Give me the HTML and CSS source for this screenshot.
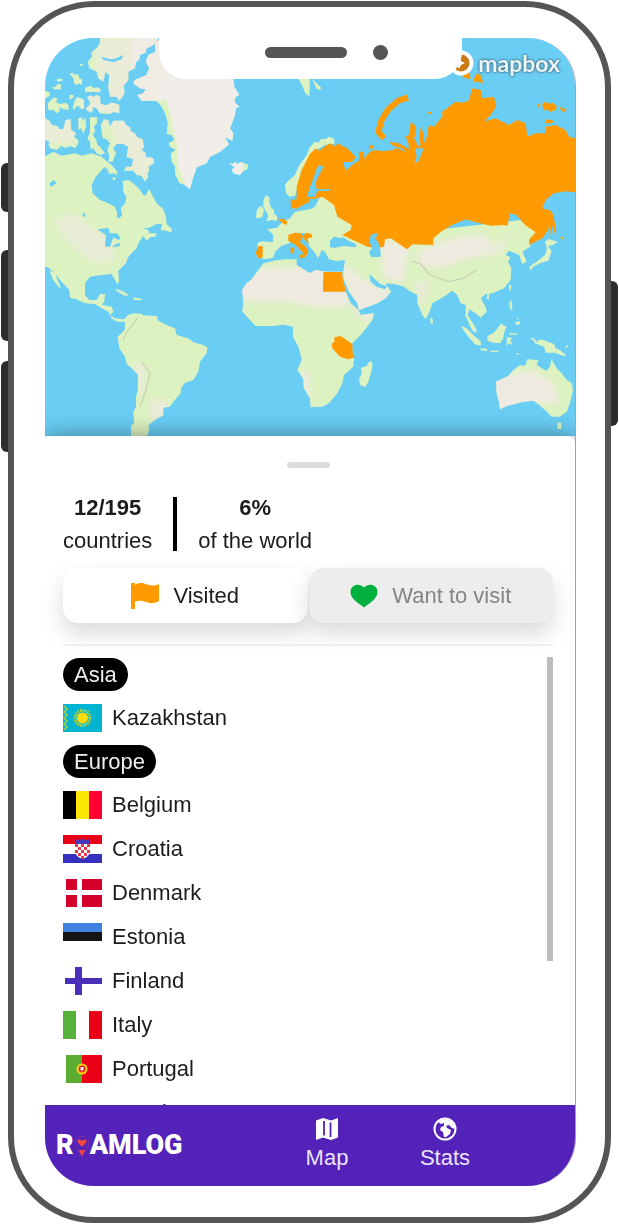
FILE: index.html
```html
<!DOCTYPE html>
<html lang="en">
<head>
<meta charset="utf-8">
<meta name="viewport" content="width=device-width, initial-scale=1">
<title>Roamlog</title>
<link rel="stylesheet" href="styles.css">
</head>
<body>
<div class="phone">
  <span class="key key-mute"></span>
  <span class="key key-up"></span>
  <span class="key key-down"></span>
  <span class="key key-power"></span>
  <div class="screen">
    <div class="notch"><span class="speaker"></span><span class="camera"></span></div>

    <div class="map">
      <svg class="world" viewBox="135 114 1590 1194" preserveAspectRatio="xMidYMid slice" role="img" aria-label="World map">
        <defs>
          <filter id="soft" x="-30%" y="-30%" width="160%" height="160%"><feGaussianBlur stdDeviation="10"/></filter>
          <path id="land" d="M130 472L160 455 185 467 225 460 245 467 275 460 305 470 322 485 335 495 352 515 348 522 325 510 315 500 300 515 285 535 275 555 278 580 300 600 325 610 345 620 352 640 350 652 357 655 367 645 362 625 375 610 379 590 370 575 368 543 385 540 400 550 420 570 432 587 438 585 447 567 462 595 470 610 490 628 498 650 500 672 516 688 514 697 498 692 482 690 486 672 470 672 446 684 428 685 445 690 447 700 470 700 466 710 450 712 440 722 430 708 415 730 410 745 385 770 378 790 355 812 357 845 352 853 345 840 335 822 305 825 270 830 255 850 255 885 268 900 290 900 300 882 315 882 313 905 305 914 335 920 340 935 330 945 345 955 365 958 372 958 385 945 400 940 425 941 428 946 470 948 475 962 500 975 525 985 530 1005 565 1015 580 1027 610 1035 622 1042 620 1060 600 1085 595 1115 580 1140 555 1148 543 1165 542 1180 520 1205 510 1220 490 1223 490 1245 465 1260 445 1275 448 1290 440 1310 393 1310 393 1278 402 1270 400 1235 408 1220 408 1190 414 1170 414 1125 395 1105 380 1092 375 1070 358 1045 353 1010 374 990 375 965 350 965 335 955 325 935 300 922 285 912 255 910 230 898 210 893 208 870 185 845 160 815 146 803 130 798Z
            M148 810L165 820 183 865 175 860 158 838ZM345 866L365 872 387 885 375 888 350 873ZM400 892L425 896 424 901 400 899Z
            M300 114L475 114 468 128 455 138 440 145 436 158 420 165 418 178 408 186 404 205 385 215 385 240 370 258 374 275 368 290 357 302 350 290 330 290 325 262 328 225 316 215 310 245 295 235 290 215 268 205 263 185 275 170 275 155 290 145 300 130Z
            M209 222L216 218 225 224 234 222 238 234 247 240 245 255 235 250 230 256 222 248 220 234ZM157 262L168 260 172 252 182 252 183 268 160 268ZM170 237L187 236 187 242 172 245ZM135 272L148 276 150 288 140 292 135 298ZM143 312L152 300 162 292 172 296 168 306 180 312 198 308 206 316 206 330 190 328 180 322 178 334 170 340 160 330 145 330ZM218 322L222 308 230 292 242 294 252 300 252 325 244 328 236 318 228 320 222 330ZM262 290L275 286 280 292 290 284 300 290 302 312 320 316 332 308 345 310 358 315 358 340 340 336 330 342 300 340 290 325 280 320 275 338 262 332 258 325 272 312ZM255 262L265 262 268 256 283 265 290 262 303 268 300 277 255 275ZM240 192L248 192 248 197 240 197ZM208 285L220 285 220 292 208 300Z
            M135 355L148 362 155 375 172 378 178 388 190 388 197 360 212 358 213 390 222 394 228 400 222 412 235 420 235 430 225 445 212 438 195 444 185 438 170 450 150 445 145 432 150 425 135 420ZM235 355L245 352 248 362 256 352 258 380 250 402 244 385 235 390ZM270 352L292 352 290 372 282 378 285 395 278 404 288 418 292 434 300 440 315 460 302 465 290 460 280 445 272 448 270 425 262 415 270 398ZM302 375L312 358 325 360 330 380 340 362 372 362 378 375 390 382 392 394 405 400 410 410 428 418 432 440 425 450 436 458 438 474 450 470 462 478 462 490 445 500 448 512 442 522 445 530 435 545 425 528 410 525 400 512 372 512 378 500 395 500 400 478 380 470 385 440 370 432 350 432 340 445 348 460 338 485 325 485 328 468 322 450 330 430 320 418 308 415Z
            M320 488L335 494 350 516 353 526 340 520 328 522 322 508ZM338 532L346 532 346 540 338 540Z
            M478 120L465 128 467 155 445 165 438 185 448 205 440 225 405 240 400 250 420 265 438 267 430 280 413 285 425 303 470 303 485 320 497 345 503 370 500 402 515 405 523 420 505 430 510 440 527 450 512 460 515 485 525 500 525 522 538 550 555 555 570 568 577 540 590 502 620 490 630 470 660 455 687 433 675 412 697 422 700 400 690 385 705 345 708 325 718 320 703 305 707 290 718 285 703 260 700 236 700 114Z
            M687 488L700 492 704 486 712 492 722 487 734 490 745 495 742 508 730 512 720 525 700 520 695 508 705 503ZM895 236L928 236 930 255 928 290 915 278 906 255ZM936 236L962 262 962 270 950 266 942 250Z
            M930 440L945 425 955 428 962 418 980 416 985 410 1003 416 1003 432 975 435 940 455 920 485 905 510 890 570 885 588 868 590 858 578 855 555 862 545 885 525 895 500 920 465Z
            M790 602L797 585 808 592 808 605 812 620 822 630 822 640 832 650 830 662 812 660 798 664 805 648 800 638 790 620ZM770 632L776 622 783 618 792 628 787 652 768 655Z
            M773 728L785 724 818 727 820 705 802 688 832 683 845 668 870 655 885 635 930 628 945 620 960 590 1000 585 1100 650 1300 690 1560 660 1610 690 1590 740 1567 755 1580 785 1567 792 1557 765 1527 752 1517 765 1532 772 1524 785 1534 805 1532 840 1512 865 1477 880 1457 882 1442 895 1457 922 1460 935 1442 953 1427 940 1407 928 1402 950 1417 970 1430 995 1420 993 1407 965 1397 950 1397 915 1382 910 1372 885 1357 872 1332 890 1297 910 1289 935 1277 958 1267 945 1252 910 1252 885 1227 872 1212 860 1187 853 1157 850 1173 875 1157 895 1132 910 1077 930 1072 910 1047 875 1032 840 1030 815 1035 780 1010 783 987 778 975 755 965 750 960 762 955 775 942 755 927 738 920 700 900 700 867 730 845 737 825 755 820 773 795 778 770 770Z
            M790 790L820 782 850 778 890 778 890 795 930 820 947 810 977 815 1027 815 1028 840 1037 875 1052 910 1075 930 1082 945 1122 940 1117 960 1087 1000 1057 1030 1055 1055 1062 1075 1060 1100 1032 1125 1027 1150 1012 1180 987 1210 967 1220 932 1222 930 1195 912 1165 909 1135 892 1110 905 1080 897 1045 879 1010 879 980 850 974 822 978 767 978 745 955 727 935 730 905 727 870 740 850 755 838 768 820Z
            M1108 1085L1117 1085 1117 1105 1105 1145 1095 1162 1080 1155 1077 1138 1085 1120 1083 1103 1100 1098ZM1292 950L1299 960 1298 972 1291 970Z
            M1384 977L1400 985 1420 1005 1443 1025 1442 1037 1425 1033 1405 1010 1390 990ZM1398 945L1406 950 1428 985 1430 998 1420 995 1408 975ZM1462 1008L1480 1000 1505 970 1512 978 1520 978 1512 1000 1510 1015 1500 1030 1480 1028 1463 1022ZM1442 1045L1460 1046 1463 1053 1442 1051ZM1470 1052H1495V1056H1470ZM1520 1012L1540 1014 1530 1020 1538 1035 1527 1030 1520 1038ZM1528 1000H1552V1004H1528ZM1548 1060H1558V1063H1548ZM1587 1013L1602 1015 1610 1025 1620 1018 1640 1024 1662 1032 1667 1045 1680 1050 1700 1067 1688 1067 1665 1058 1637 1058 1632 1040 1605 1030 1600 1020ZM1695 1040L1706 1034 1700 1044ZM1529 902L1535 902 1535 925 1529 928ZM1530 900L1537 918 1532 932 1538 930ZM1545 968L1558 962 1560 972 1550 975ZM1550 955L1556 952 1555 960ZM1462 880L1468 880 1466 900 1460 895ZM1527 855L1534 855 1532 873 1528 873Z
            M1635 725L1645 717 1673 725 1660 735 1645 737 1655 755 1645 782 1620 790 1600 800 1590 812 1588 800 1610 785 1635 765 1641 745Z
            M1488 1145L1520 1130 1525 1128 1540 1110 1560 1095 1575 1098 1582 1078 1615 1080 1610 1095 1638 1112 1650 1100 1654 1077 1665 1095 1670 1105 1685 1120 1700 1140 1715 1148 1719 1170 1710 1210 1700 1235 1680 1250 1655 1250 1635 1230 1618 1215 1600 1202 1570 1205 1520 1218 1500 1228 1497 1205 1490 1180ZM1672 1268L1684 1268 1684 1287 1672 1287Z"/>
          <clipPath id="coast"><use href="#land"/></clipPath>
        </defs>
        <rect class="sea" x="135" y="114" width="1590" height="1194"/>
        <use href="#land" class="land"/>
        <g clip-path="url(#coast)">
          <g class="ice">
            <path d="M395 114H730V570H560L535 500 530 430 500 300H395Z"/>
          </g>
          <g class="dry" filter="url(#soft)">
            <path d="M280 114H480V310H350L290 230ZM240 275H360V345H240ZM130 350H230V430H130ZM300 350H390L470 480 440 540 370 500 340 400ZM160 660L220 640 330 720 350 780 280 790 200 720Z" opacity=".7"/>
            <path d="M700 860L780 805 900 800 1030 800 1050 920 940 920 860 905 700 905ZM1030 790L1110 850 1190 880 1070 950ZM1140 720L1230 730 1210 850 1150 830ZM1250 760L1320 725 1450 700 1480 740 1340 800 1260 800ZM1470 1130L1600 1110 1660 1150 1680 1210 1600 1210 1490 1240ZM1070 925L1135 925 1100 970Z"/>
            <path d="M405 1090H432V1190H410ZM450 1200H500V1260H450ZM900 1110H930V1220H900ZM1540 700L1500 760 1400 780ZM1240 850L1290 840 1270 920Z" opacity=".8"/>
          </g>
          <path class="ridge" d="M1237 785L1260 790 1290 825 1345 845 1390 835 1430 810M412 955L385 990 368 1020M425 1085L450 1120 435 1180 420 1220"/>
        </g>
        <g class="visited">
          <path d="M905 510L930 462 947 445 957 452 977 438 990 430 1007 440 1012 430 1042 445 1067 470 1057 485 1035 490 1037 512 1060 492 1077 482 1077 455 1090 455 1092 475 1110 455 1127 450 1150 454 1177 450 1192 443 1217 457 1207 445 1180 438 1167 425 1197 430 1227 447 1225 430 1217 410 1228 404 1232 365 1247 378 1247 405 1242 415 1250 430 1252 440 1262 436 1258 415 1262 380 1270 400 1272 430 1280 412 1282 400 1287 375 1302 380 1327 350 1327 335 1367 305 1390 308 1407 300 1417 265 1442 270 1447 295 1482 290 1488 320 1472 345 1452 365 1487 355 1527 375 1552 360 1577 370 1582 410 1607 400 1637 400 1637 380 1667 375 1697 390 1707 410 1725 415V577L1697 574 1662 580 1637 600 1627 625 1647 630 1650 650 1645 690 1627 715 1587 735 1587 720 1607 697 1575 675 1550 645 1530 640 1522 678 1512 675 1472 677 1427 667 1397 658 1357 675 1327 692 1300 715 1300 735 1237 733 1222 748 1202 735 1172 715 1155 718 1152 740 1130 745 1102 740 1027 705 1052 690 1055 675 1012 650 1002 615 967 590 940 598 930 595 930 605 905 617 890 626 873 624 872 600 890 598 890 560Z"/>
          <path d="M1386 230L1405 215 1412 233 1408 238ZM1420 246L1424 230 1432 220 1442 226 1446 238 1450 250 1436 246ZM1627 312L1635 305 1650 312 1655 306 1670 318 1668 330 1650 335 1640 328 1630 333ZM1612 310L1620 315 1618 322 1612 320ZM1680 320L1700 330 1695 336 1682 330ZM1640 358L1662 362 1655 370 1635 370ZM1108 436L1118 436 1120 446 1108 446ZM1285 336H1293V342H1285ZM1651 630L1660 645 1668 690 1665 705 1658 675 1652 710 1652 700 1647 660ZM1680 712L1692 710 1688 718Z"/>
          <path class="isle" d="M1224 292L1195 302 1165 328 1145 360 1135 395 1152 415"/>
          <path d="M834 658L850 656 862 665 860 675 848 670ZM775 738L788 738 788 773 775 775 767 760ZM865 705L885 698 905 700 905 715 900 725 922 745 925 758 915 772 898 775 900 765 912 762 888 735 865 722ZM872 742L883 745 882 760 872 760ZM905 710L920 698 935 703 937 712 920 716 930 732 915 720ZM970 816H1027V832L1038 875H969ZM1003 1012L1022 1008 1057 1032 1058 1060 1064 1072 1045 1078 1020 1070 997 1045 995 1032 1003 1025Z"/>
        </g>
        <g class="sea">
          <path d="M938 494L951 500 940 520 926 550 932 572 926 590 908 590 900 592 910 560 922 530 928 510Z" transform="translate(20)"/>
          <path d="M950 568H990V573H950ZM1112 705L1132 698 1128 718 1140 735 1142 770 1115 772 1107 758 1116 745 1108 725ZM990 722L1002 710 1018 714 1030 712 1045 722 1068 732 1068 742 1030 738 1005 743 990 742ZM1030 486H1054L1058 492 1045 505 1030 500ZM1245 445L1271 445 1265 460 1255 485 1243 488 1250 470Z"/>
          <path d="M292 688L325 684 330 700 350 700 362 714 355 720 340 712 330 740 315 740 318 705ZM337 738L358 728 360 738 340 742ZM148 550L162 540 170 550 152 560ZM248 637L257 645 255 652 248 648ZM305 170L330 178 345 176 370 165 365 178 340 186 310 180ZM1108 822L1127 840 1142 853 1162 858 1155 868 1130 860 1112 845Z"/>
        </g>
      </svg>
      <a class="mapbox" href="#mapbox">
        <svg class="mapbox-mark" viewBox="0 0 26 26" aria-hidden="true"><circle cx="13" cy="13" r="10.500" fill="#c97a12" stroke="#fff" stroke-width="4"/><path d="M11 7l2 4 4 2-4 2-2 4-2-4-4-2 4-2z" fill="#fff"/></svg>
        <span>mapbox</span>
      </a>
    </div>

    <main class="sheet">
      <div class="handle"></div>
      <div class="stats">
        <p class="stat"><strong>12/195</strong><span>countries</span></p>
        <span class="divider"></span>
        <p class="stat"><strong>6%</strong><span>of the world</span></p>
      </div>
      <div class="tabs">
        <button class="tab tab-active" type="button">
          <svg class="tab-icon" viewBox="0 0 28 28" aria-hidden="true"><path d="M0 1H4V3C9 0 12 1 16 2.500 20 4 24 4 28 2V19C23 22 19 21.500 15 20 11 18.500 8 18.500 4 19.500V27H0Z" fill="#ff9b00"/></svg>
          <span>Visited</span>
        </button>
        <button class="tab" type="button">
          <svg class="tab-icon" viewBox="0 0 28 28" aria-hidden="true"><path d="M14 25.500C10 22 0 17 .5 9.500 1 3 9 .5 14 5.500 19 .5 27 3 27.500 9.500 28 17 18 22 14 25.500Z" fill="#00b140"/></svg>
          <span>Want to visit</span>
        </button>
      </div>
      <hr class="rule">
      <div class="scroller">
        <div class="list">
          <h2 class="region">Asia</h2>
          <ul class="countries">
            <li class="country"><svg class="flag" viewBox="0 0 39 28" aria-hidden="true"><path d="M0 0H39V28H0Z" fill="#00b5d1"/><circle cx="19.500" cy="14" r="7.500" fill="none" stroke="#b5d334" stroke-width="3" stroke-dasharray="1.500 1"/><circle cx="19.500" cy="14" r="5.500" fill="#fddc0b"/><path d="M1 2L4 5 1 8 4 11 1 14 4 17 1 20 4 23 1 26" fill="none" stroke="#a8cf3c" stroke-width="1.500"/></svg>Kazakhstan</li>
          </ul>
          <h2 class="region">Europe</h2>
          <ul class="countries">
            <li class="country"><svg class="flag" viewBox="0 0 39 28" aria-hidden="true"><path d="M0 0H13V28H0Z"/><path d="M13 0H26V28H13Z" fill="#fbe700"/><path d="M26 0H39V28H26Z" fill="#ff0036"/></svg>Belgium</li>
            <li class="country"><svg class="flag" viewBox="0 0 39 28" aria-hidden="true"><path d="M0 0H39V9H0Z" fill="#ea0016"/><path d="M0 19H39V28H0Z" fill="#3530bd"/><path d="M12 9H27V17Q26 22 19.500 24 13 22 12 17Z" fill="#fff"/><path d="M12 4L16 5 19.500 4 23 5 27 4V9H12Z" fill="#4638b8"/><path d="M12 9h3v3h-3zM18 9h3v3h-3zM24 9h3v3h-3zM15 12h3v3h-3zM21 12h3v3h-3zM12 15h3v3h-3zM18 15h3v3h-3zM24 15h3v3h-3zM15 18h3v3h-3zM21 18h3v3h-3zM18 21h3v3h-3z" fill="#ea3b4b"/></svg>Croatia</li>
            <li class="country"><svg class="flag" viewBox="0 0 39 28" aria-hidden="true"><path d="M3 0H14V11H3ZM19 0H39V11H19ZM3 16H14V28H3ZM19 16H39V28H19Z" fill="#d2002b"/></svg>Denmark</li>
            <li class="country"><svg class="flag" viewBox="0 0 39 28" aria-hidden="true"><path d="M0 0H39V9H0Z" fill="#4182e0"/><path d="M0 9H39V18H0Z" fill="#141414"/></svg>Estonia</li>
            <li class="country"><svg class="flag" viewBox="0 0 39 28" aria-hidden="true"><path d="M2 11H12V0H19V11H39V17H19V28H12V17H2Z" fill="#4a2fb8"/></svg>Finland</li>
            <li class="country"><svg class="flag" viewBox="0 0 39 28" aria-hidden="true"><path d="M0 0H13V28H0Z" fill="#56b23a"/><path d="M26 0H39V28H26Z" fill="#ea0016"/></svg>Italy</li>
            <li class="country"><svg class="flag" viewBox="0 0 39 28" aria-hidden="true"><path d="M3 0H19V28H3Z" fill="#5cab32"/><path d="M19 0H39V28H19Z" fill="#ea0016"/><circle cx="19" cy="14" r="4.500" fill="#ea3a20" stroke="#f5d50c" stroke-width="2"/><path d="M17 11.500H21V15Q19 18 17 15Z" fill="#fff" stroke="#ea0016"/></svg>Portugal</li>
            <li class="country"><svg class="flag" viewBox="0 0 39 28" aria-hidden="true"><path d="M0 9H39V19H0Z" fill="#2a4fc0"/><path d="M0 19H39V28H0Z" fill="#d2002b"/></svg>Russia</li>
          </ul>
        </div>
        <span class="thumb"></span>
      </div>
    </main>

    <nav class="nav">
      <a class="logo" href="#home" aria-label="Roamlog"><span>R</span><svg class="pin" viewBox="0 0 16 24" aria-hidden="true"><path d="M8 23L2 13A7 7 0 1 1 14 13Z" fill="none" stroke="#7d2c9c" stroke-width="1"/><path d="M8 13L3.500 8Q3 5 6 5.500L8 7 10 5.500Q13 5 12.500 8Z" fill="#f4483f"/><path d="M4.500 15.500Q8 17 11.500 15.500L8 22Z" fill="#f4483f"/></svg><span>AMLOG</span></a>
      <a class="nav-link" href="#map">
        <svg class="nav-icon" viewBox="0 0 24 24" aria-hidden="true"><path d="M1 3.500L8 1 16 3.500 23 1V20.500L16 23 8 20.500 1 23Z" fill="#fff"/><path d="M9 4V18.500M15.500 5.500V20" fill="none" stroke="#5322b8" stroke-width="1.800"/></svg>
        <span>Map</span>
      </a>
      <a class="nav-link" href="#stats">
        <svg class="nav-icon" viewBox="0 0 24 24" aria-hidden="true"><circle cx="12" cy="12" r="10.500" fill="#5322b8" stroke="#fff" stroke-width="2"/><path d="M5 5Q12-1 20 6L22 12 19 11 16 8 13 9 14 11 18 13 17 17 13 20 11 20 10 15 7 13 8 10 11 9 11 6 8 7Z" fill="#fff"/></svg>
        <span>Stats</span>
      </a>
    </nav>
  </div>
</div>
</body>
</html>
```
FILE: styles.css
```css
* { box-sizing: border-box; }

body {
  margin: 0;
  padding: 1px 8px;
  background: #fff;
  color: #1c1c1c;
  font: 22px/33px "Liberation Sans", Arial, sans-serif;
}

h2, p, ul { margin: 0; padding: 0; }
ul { list-style: none; }
a { color: inherit; text-decoration: none; }

/* Device */
.phone {
  position: relative;
  height: calc(100vh - 2px);
  padding: 31px 29px 31px 31px;
  border: 6px solid #555;
  border-radius: 86px;
}

.key {
  position: absolute;
  left: -13px;
  width: 7px;
  border-radius: 6px 0 0 6px;
  background: #2d2d2d;
}
.key-mute { top: 156px; height: 49px; }
.key-up { top: 243px; height: 91px; }
.key-down { top: 354px; height: 91px; }
.key-power {
  top: 274px;
  right: -13px;
  left: auto;
  height: 145px;
  border-radius: 0 6px 6px 0;
}

.screen {
  position: relative;
  display: flex;
  flex-direction: column;
  height: 100%;
  overflow: hidden;
  border-right: 1px solid #aba0a0;
  border-radius: 48px;
}

.notch {
  position: absolute;
  z-index: 3;
  top: 0;
  left: 50%;
  width: 303px;
  height: 41px;
  margin-left: -151px;
  border-radius: 0 0 27px 27px;
  background: #fff;
}
.speaker, .camera { position: absolute; background: #555; }
.speaker { top: 9px; left: 106px; width: 82px; height: 11px; border-radius: 6px; }
.camera { top: 7px; left: 214px; width: 15px; height: 15px; border-radius: 50%; }

/* Map */
.map { position: relative; flex: none; height: 398px; }
.world { display: block; width: 100%; height: 100%; }
.sea { fill: #69cdf4; }
.land { fill: #dcf2c0; }
.ice { fill: #f1ede8; }
.dry { fill: #efeae1; }
.ridge { fill: none; stroke: #c9d4b0; stroke-width: 4; }
.visited { fill: #ff9b00; }
.isle { fill: none; stroke: #ff9b00; stroke-width: 18; }

.mapbox {
  position: absolute;
  top: 10px;
  right: 15px;
  display: flex;
  align-items: center;
  gap: 4px;
  color: #e9f6fc;
  font: 700 23px/30px Lato, sans-serif;
  text-shadow: 0 0 3px #45636f, 0 0 2px #45636f;
}
.mapbox-mark { width: 26px; height: 26px; }

/* Bottom sheet */
.sheet {
  position: relative;
  display: flex;
  flex: 1;
  flex-direction: column;
  min-height: 0;
  padding: 26px 22px 0 18px;
  border-radius: 4px 8px 0 0;
  background: #fff;
  box-shadow: 0 0 22px rgba(0, 0, 0, .4);
}

.handle {
  flex: none;
  align-self: center;
  width: 43px;
  height: 6px;
  margin-bottom: 23px;
  border-radius: 3px;
  background: #ddd;
}

.stats { display: flex; align-items: center; gap: 21px; margin-bottom: 11px; }
.stat { display: flex; flex-direction: column; align-items: center; }
.divider { width: 4px; height: 54px; background: #000; }

.tabs { display: flex; gap: 1px; }
.tab {
  display: flex;
  flex: 1;
  align-items: center;
  justify-content: center;
  gap: 14px;
  height: 55px;
  padding: 0;
  border: 0;
  border-radius: 15px;
  background: #ededed;
  color: #858585;
  font: inherit;
  box-shadow: 0 11px 22px rgba(0, 0, 0, .15);
}
.tab-active { background: #fff; color: #1c1c1c; }
.tab-icon { width: 28px; height: 28px; }

.rule {
  flex: none;
  width: 100%;
  height: 2px;
  margin: 21px 0 11px;
  border: 0;
  background: #eee;
}

.scroller { display: flex; flex: 1; min-height: 0; }
.list { flex: 1; padding-top: 1px; overflow-y: auto; scrollbar-width: none; }
.thumb { width: 6px; height: 304px; background: #bdbdbd; }

.region {
  width: fit-content;
  margin-bottom: 10px;
  padding: 0 11px;
  border-radius: 17px;
  background: #000;
  color: #eee;
  font-size: 22px;
  font-weight: 400;
}
.country {
  display: flex;
  align-items: center;
  gap: 10px;
  margin-bottom: 11px;
}
.flag { width: 39px; height: 28px; }

/* Navigation */
.nav {
  z-index: 1;
  display: grid;
  flex: none;
  grid-template-columns: 223fr 118fr 118fr 71fr;
  align-items: center;
  height: 81px;
  background: #5322b8;
  color: #ebe3fa;
}
.logo {
  display: flex;
  align-items: center;
  padding-left: 11px;
  color: #fff;
  font: 900 27px/33px Roboto, sans-serif;
}
.pin { width: 16px; height: 24px; }
.nav-link { display: flex; flex-direction: column; align-items: center; }
.nav-icon { width: 24px; height: 24px; }
```
